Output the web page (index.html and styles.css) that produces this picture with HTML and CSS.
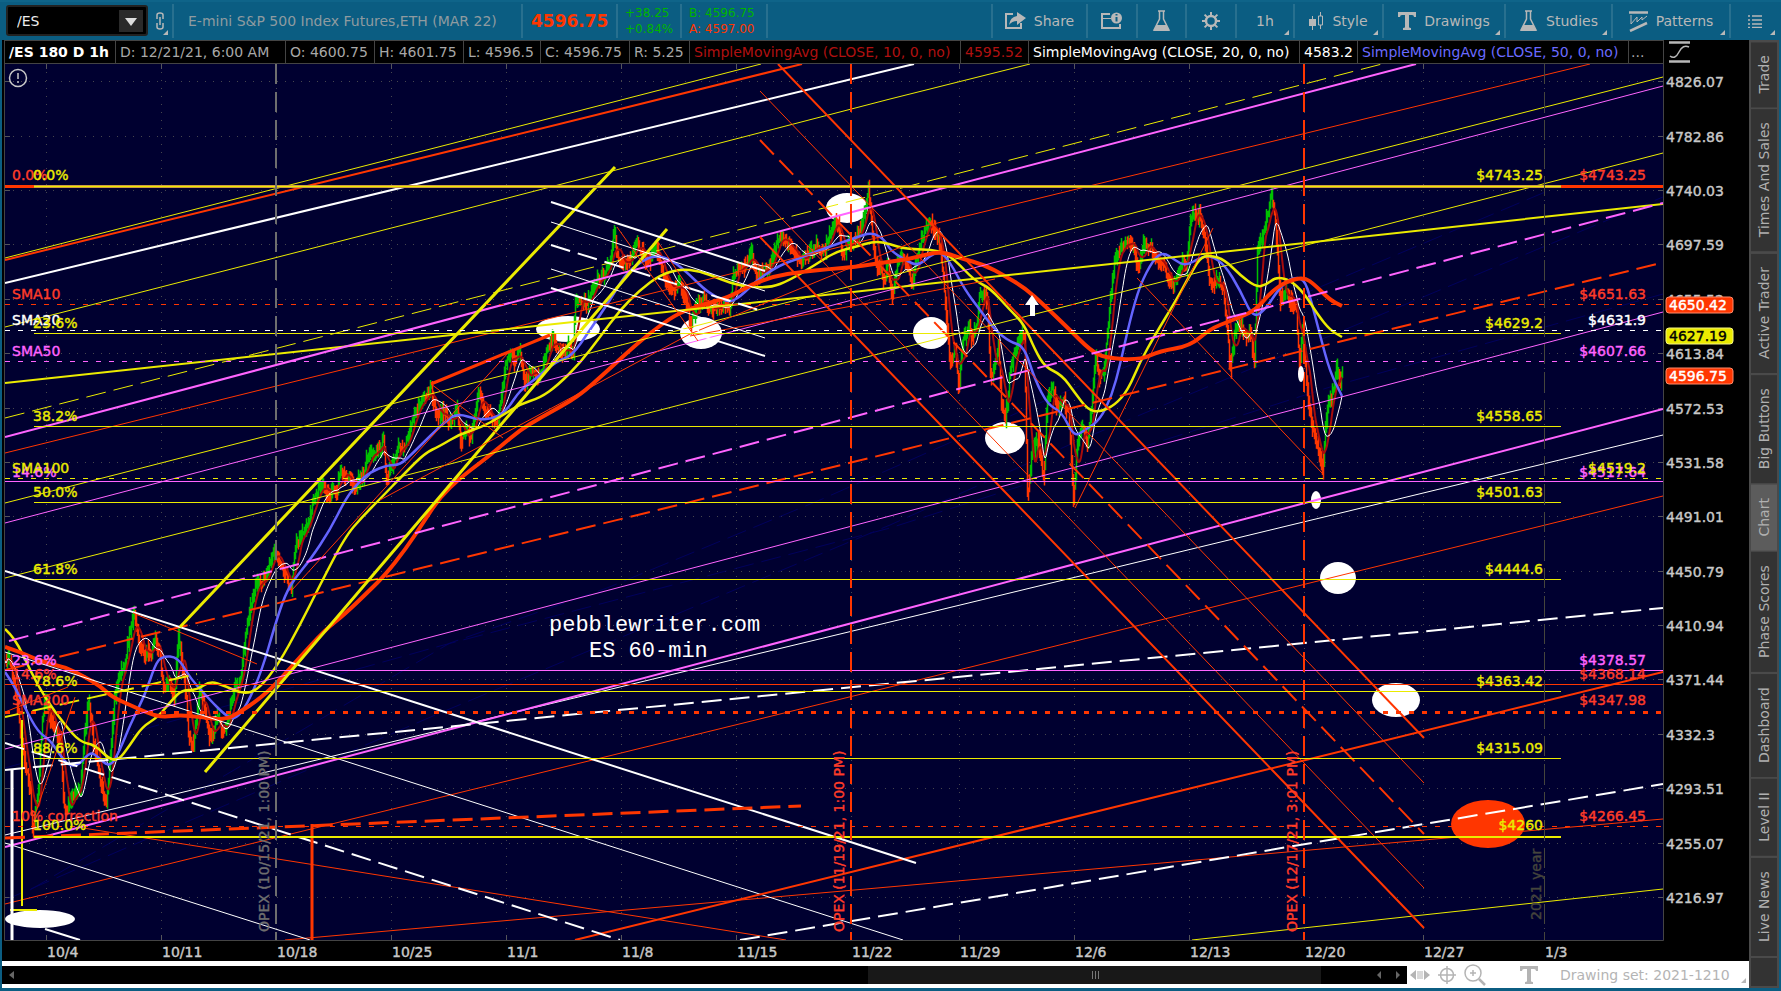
FILE: index.html
```
<!DOCTYPE html>
<html lang="en">
<head>
<meta charset="UTF-8">
<meta name="viewport" content="width=device-width, initial-scale=1.0">
<title>/ES 180 D 1h - Chart</title>
<link rel="stylesheet" href="styles.css">
</head>
<body>
  <!-- Toolbar -->
  <header class="toolbar">
    <div class="symbol">
      <label class="hidden" for="symbol">Symbol</label>
      <input type="text" id="symbol" value="/ES">
      <button class="drop" aria-label="Symbol list"><svg width="12" height="8"><path d="M0 0h12l-6 8z" fill="#ddd"/></svg></button>
    </div>
    <button class="link corner" aria-label="Link"><svg width="10" height="18" viewBox="0 0 10 18" fill="none" stroke="#b8b8b8" stroke-width="1.5"><path d="M2 7V3q0-2 3-2t3 2v4M2 11v4q0 2 3 2t3-2v-4M5 5v8"/></svg></button>
    <div class="name">E-mini S&amp;P 500 Index Futures,ETH (MAR 22)</div>
    <div class="last">4596.75</div>
    <div class="pair change"><span class="up">+38.25</span><span class="up">+0.84%</span></div>
    <div class="pair quote"><span class="up">B: 4596.75</span><span class="down">A: 4597.00</span></div>
    <div class="spacer"></div>
    <button class="tool share">
      <svg width="21" height="18" viewBox="0 0 21 18"><path d="M8 2H1v14h15v-5" fill="none" stroke="#b8b8b8" stroke-width="2"/><path d="M12 0l9 6-9 7V9q-5 0-8 4 1-8 8-9z" fill="#b8b8b8"/></svg>
      Share
    </button>
    <button class="tool info" aria-label="Symbol info"><svg width="22" height="18" viewBox="0 0 22 18" fill="none" stroke="#b8b8b8"><path d="M9 2H1v14h18v-4" stroke-width="2"/><path d="M1 6.500h9"/><circle cx="15.500" cy="6" r="5.500" fill="#b8b8b8" stroke="none"/><path d="M15.500 5v4.500M15.500 2v1.500" stroke="#0b5d82" stroke-width="2"/></svg></button>
    <button class="tool flask" aria-label="Quick study"><svg width="19" height="22" viewBox="0 0 19 22"><path d="M6 1h7M7.500 1v8L2 20h15L11.500 9V1" fill="none" stroke="#b8b8b8" stroke-width="1.500"/><path d="M4.500 15h10l3 6h-16z" fill="#b8b8b8"/></svg></button>
    <button class="tool gear" aria-label="Settings"><svg width="20" height="20" viewBox="0 0 20 20" fill="none" stroke="#b8b8b8"><circle cx="10" cy="10" r="5" stroke-width="2.500"/><path d="M10 1v4M10 15v4M1 10h4M15 10h4M3.600 3.600l3 3M13.400 13.400l3 3M3.600 16.400l3-3M13.400 6.600l3-3" stroke-width="2"/></svg></button>
    <button class="tool hour corner">1h</button>
    <button class="tool style corner">
      <svg width="15" height="18" viewBox="0 0 15 18"><path d="M3.500 4v14M11.500 0v4M11.500 13v4" stroke="#b8b8b8"/><path d="M0 7h7v7H0z" fill="#b8b8b8"/><path d="M9.500 4h4v9h-4z" fill="none" stroke="#b8b8b8"/></svg>
      Style
    </button>
    <button class="tool drawings corner">
      <svg width="18" height="18" viewBox="0 0 18 18"><path d="M0 0h18v5h-2q0-2-2-2h-3v12q0 1 2 1v2H5v-2q2 0 2-1V3H4Q2 3 2 5H0z" fill="#b8b8b8"/></svg>
      Drawings
    </button>
    <button class="tool studies corner">
      <svg width="19" height="22" viewBox="0 0 19 22"><path d="M6 1h7M7.500 1v8L2 20h15L11.500 9V1" fill="none" stroke="#b8b8b8" stroke-width="1.500"/><path d="M4.500 15h10l3 6h-16z" fill="#b8b8b8"/></svg>
      Studies
    </button>
    <button class="tool patterns corner">
      <svg width="19" height="21" viewBox="0 0 19 21" fill="none" stroke="#b8b8b8"><path d="M0 1.500h19M1 20l17-8" stroke-width="2.500"/><path d="M2 4v9l6-7v5l5-5v3l5-4"/></svg>
      Patterns
    </button>
    <button class="tool more corner" aria-label="Menu"><svg width="14" height="13" viewBox="0 0 14 13" stroke="#b8b8b8"><path d="M0 1h2M0 5h2M0 9h2M0 12.500h2M4 1h10M4 5h10M4 9h10M4 12.500h10" stroke-width="1.500"/></svg></button>
  </header>

  <div class="main">
    <div class="panel">
      <!-- Values under the cursor -->
      <div class="status">
        <div class="cells">
          <span class="bold">/ES 180 D 1h</span>
          <span class="date">D: 12/21/21, 6:00 AM</span>
          <span class="price">O: 4600.75</span>
          <span class="price">H: 4601.75</span>
          <span class="low">L: 4596.5</span>
          <span class="price">C: 4596.75</span>
          <span class="range">R: 5.25</span>
          <span class="study sma10">SimpleMovingAvg (CLOSE, 10, 0, no)</span>
          <span class="value sma10">4595.52</span>
          <span class="study sma20">SimpleMovingAvg (CLOSE, 20, 0, no)</span>
          <span class="sma20">4583.2</span>
          <span class="study sma50">SimpleMovingAvg (CLOSE, 50, 0, no)</span>
          <span class="rest">...</span>
        </div>
        <button class="scale" aria-label="Price axis"><svg width="22" height="22" viewBox="0 0 22 22" fill="none" stroke="#b8b8b8"><path d="M0 1.500h21M0 20.500h21" stroke-width="2.500"/><path d="M1 15q5 4 9-4t10-5" stroke-width="1.500"/></svg></button>
      </div>

      <!-- Chart: 1 unit across is one hourly bar -->
      <svg class="chart" viewBox="2 64 1747 897" preserveAspectRatio="none">
        <defs><clipPath id="plot"><path d="M5 64h1658v876H5z"/></clipPath></defs>
        <path class="sky" d="M5 64h1658v876H5z"/>
        <g id="grid"></g>
        <path class="edge" d="M4.500 64v876.500h1659V64"/>

        <g clip-path="url(#plot)">
          <g fill="#fff">
            <ellipse cx="40" cy="919" rx="35" ry="9"/>
            <ellipse cx="568" cy="329" rx="32" ry="13"/>
            <ellipse cx="701" cy="333" rx="21" ry="16"/>
            <ellipse cx="847" cy="208" rx="21" ry="15"/>
            <ellipse cx="931" cy="333" rx="18" ry="16"/>
            <ellipse cx="1005" cy="438" rx="20" ry="16"/>
            <ellipse cx="1316" cy="500" rx="5" ry="9"/>
            <ellipse cx="1338" cy="578" rx="18" ry="16"/>
            <ellipse cx="1396" cy="700" rx="24" ry="17"/>
          </g>
          <ellipse cx="1488" cy="824" rx="37" ry="24" fill="#ff3600"/>

          <g class="navy dash">
            <path d="M30 890L450 643 607 588 820 500 1060 394 1320 287 1550 190"/>
            <path d="M5 900L440 713 890 525 1080 440 1320 340 1663 197"/>
            <path d="M5 768L440 646 890 528 1330 387 1663 294"/>
          </g>

          <!-- candles and averages are filled in by chart.js -->
          <path id="up" class="bar-up"/>
          <path id="down" class="bar-down"/>
          <path id="sma10" class="avg sma10-line"/>
          <path id="sma20" class="avg sma20-line"/>
          <path id="sma50" class="avg sma50-line"/>
          <path id="sma100" class="avg sma100-line"/>
          <path id="sma200" class="avg sma200-line"/>

          <!-- rising channels -->
          <g class="yellow thin">
            <path d="M5 258L450 144 761 64M5 327L450 213 890 99 1030 64M5 503L450 389 890 276 1330 162 1663 77M5 578L450 464 890 351 1330 239 1663 153M1192 940L1663 889"/>
            <path class="dash" d="M5 418L890 191 1382 64"/>
          </g>
          <g class="magenta thin"><path d="M5 523L450 406 890 290 1330 174 1663 86M5 749L450 632 890 516 1330 400 1663 312"/></g>
          <g class="red thin"><path d="M5 453L880 237 1590 64M5 904L450 795 890 687 1330 578 1663 496M83 828L786 940M285 940L1663 819"/></g>
          <g class="white thin"><path d="M5 652L903 940M5 843L310 940M5 835L890 622 1663 435"/></g>
          <g class="yellow mid">
            <path d="M5 383L890 288 1663 204"/>
            <path class="dash" d="M5 717L197 674"/>
            <path d="M22 720V906M10 910H37"/>
          </g>
          <g class="magenta mid">
            <path d="M5 437L890 202 1416 64M5 847L890 613 1320 499 1663 409"/>
            <path class="dash" d="M9 641L890 407 1663 203"/>
          </g>
          <g class="red mid">
            <path d="M5 260L450 151 802 64M575 940L1663 672"/>
            <path class="dash" d="M5 670L450 561 890 453 1330 344 1657 264"/>
          </g>
          <g class="white mid">
            <path d="M5 283L450 176 914 64M5 571L916 863M45 929L80 940"/>
            <path class="dash" d="M5 743L620 940M5 770L1663 608M740 940L1323 841 1663 784"/>
          </g>
          <path class="yellow thick" d="M180 627L615 167M205 772L437 500 667 229"/>
          <path class="red thick" d="M431 384L550 335M312 824V940"/>
          <path class="white thick" d="M12 769V940"/>
          <path class="red thick dash" d="M5 838L801 806"/>

          <!-- falling channels -->
          <g class="white">
            <path class="mid" d="M551 202L765 271M551 288L765 356"/>
            <path class="mid dash" d="M551 245L759 310"/>
            <path class="thin" d="M551 222L765 291M551 269L765 338"/>
          </g>
          <g class="red">
            <path class="mid" d="M778 64L1424 738M760 237L1424 928"/>
            <path class="mid dash" d="M760 140L1424 834"/>
            <path class="thin" d="M760 91L1424 783M760 196L1424 888"/>
            <path class="thin" d="M431 384L503 438M292 590L508 353M380 500L690 334 930 235M690 336L890 299 995 279M617 227L698 341M658 242L690 290M1137 278L1322 473M1075 508L1213 228M133 613L257 664M35 815L75 697M5 712L68 687"/>
          </g>

          <!-- levels -->
          <path class="red thick" d="M5 186.500H1663"/>
          <path class="amber thick" d="M34 186.500H1561"/>
          <path class="yellow crisp" d="M34 186.500H1561M34 333.500H1561M34 426.500H1561M34 502.500H1561M34 579.500H1561M34 691.500H1561M34 758.500H1561"/>
          <path class="yellow mid" d="M34 837H1561"/>
          <path class="magenta crisp" d="M5 481.500H1663M5 670.500H1663"/>
          <path class="red crisp" d="M5 684.500H1663"/>
          <path class="red crisp short" d="M5 304.500H1663M5 826.500H1663"/>
          <path class="white crisp short" d="M5 330.500H1663"/>
          <path class="magenta crisp short" d="M5 361.500H1663"/>
          <path class="yellow crisp short" d="M5 478.500H1663"/>
          <path class="red thick short" d="M5 712.500H1663"/>
          <path class="gray mid dash" d="M276 64V940"/>
          <path class="red mid dash" d="M851 64V940M1304 64V940"/>
          <path class="dim thin dash" d="M1544.500 64V940"/>

          <ellipse cx="1301" cy="374" rx="3" ry="8" fill="#fff"/>
          <path d="M1032 295l7 10h-4v11h-5v-11h-5z" fill="#fff"/>
        </g>

        <g fill="none" stroke="#c8c8c8" stroke-width="1.500"><circle cx="18" cy="78" r="8.500"/><path d="M18 73v6M18 81v2"/></g>

        <g class="t-red">
          <text x="12" y="180">0.0%</text><text x="12" y="299">SMA10</text><text x="12" y="679">14.6%</text>
          <text x="12" y="705">SMA200</text><text x="12" y="821">10% correction</text>
        </g>
        <g class="t-magenta">
          <text x="12" y="356">SMA50</text><text x="12" y="477">14.6%</text><text x="12" y="665">23.6%</text>
        </g>
        <g class="t-white"><text x="12" y="325">SMA20</text></g>
        <g class="t-yellow">
          <text x="12" y="473">SMA100</text>
          <text x="33" y="180">0.0%</text><text x="33" y="328">23.6%</text><text x="33" y="421">38.2%</text><text x="33" y="497">50.0%</text>
          <text x="33" y="574">61.8%</text><text x="33" y="686">78.6%</text><text x="33" y="753">88.6%</text><text x="33" y="830">100.0%</text>
        </g>
        <g class="t-yellow end">
          <text x="1543" y="180">$4743.25</text><text x="1543" y="328">$4629.2</text><text x="1543" y="421">$4558.65</text><text x="1543" y="497">$4501.63</text>
          <text x="1543" y="574">$4444.6</text><text x="1543" y="686">$4363.42</text><text x="1543" y="753">$4315.09</text><text x="1543" y="830">$4260</text>
        </g>
        <g class="t-red end">
          <text x="1646" y="180">$4743.25</text><text x="1646" y="299">$4651.63</text><text x="1646" y="679">$4368.14</text>
          <text x="1646" y="705">$4347.98</text><text x="1646" y="821">$4266.45</text>
        </g>
        <g class="t-magenta end"><text x="1646" y="356">$4607.66</text><text x="1646" y="477">$4517.64</text><text x="1646" y="665">$4378.57</text></g>
        <g class="t-white end"><text x="1646" y="325">$4631.9</text></g>
        <g class="t-yellow end"><text x="1646" y="473">$4519.2</text></g>

        <text class="t-gray" transform="translate(269 932) rotate(-90)">OPEX (10/15/21, 1:00 PM)</text>
        <text class="t-red" transform="translate(844 932) rotate(-90)">OPEX (11/19/21, 1:00 PM)</text>
        <text class="t-red" transform="translate(1297 932) rotate(-90)">OPEX (12/17/21, 3:01 PM)</text>
        <text class="t-dim" transform="translate(1541 920) rotate(-90)">2021 year</text>
        <text class="note" x="549" y="631">pebblewriter.com</text>
        <text class="note" x="589" y="657">ES 60-min</text>

        <g id="axis" class="axis"></g>
        <g class="badge">
          <rect x="1666" y="297" width="67" height="16" rx="3" fill="#ff3600" stroke="#ff8a6a"/><text x="1669" y="310">4650.42</text>
          <rect x="1666" y="328" width="67" height="16" rx="3" fill="#ebeb00" stroke="#f5f580"/><text x="1669" y="341" class="t-black">4627.19</text>
          <rect x="1666" y="368" width="67" height="16" rx="3" fill="#ff3600" stroke="#ff8a6a"/><text x="1669" y="381">4596.75</text>
        </g>
      </svg>

      <!-- Scroll bar and drawing tools -->
      <div class="bottom">
        <div class="scroll">
          <svg width="6" height="8"><path d="M6 0v8L1 4z" fill="#666"/></svg>
          <div class="track"><div class="thumb"><svg width="8" height="8" stroke="#777"><path d="M1.500 0v8M4.500 0v8M7.500 0v8"/></svg></div></div>
          <svg width="6" height="8"><path d="M5 0v8L1 4z" fill="#666"/></svg>
          <svg width="6" height="8"><path d="M1 0v8l4-4z" fill="#666"/></svg>
        </div>
        <div class="icons">
          <button aria-label="Pan"><svg width="20" height="14" viewBox="0 0 20 14"><path d="M6 2v10L0 7zM14 2v10l6-5z" fill="#b4b4b4"/><path d="M8 3v8M10 3v8M12 3v8" stroke="#b4b4b4"/></svg></button>
          <button aria-label="Crosshair"><svg width="18" height="18" viewBox="0 0 18 18" fill="none" stroke="#b4b4b4" stroke-width="1.500"><circle cx="9" cy="9" r="6.500"/><path d="M9 0v18M0 9h18"/></svg></button>
          <button aria-label="Zoom in"><svg width="22" height="22" viewBox="0 0 22 22" fill="none" stroke="#b4b4b4" stroke-width="1.500"><circle cx="9" cy="9" r="8"/><path d="M9 6v6M6 9h6"/><path d="M15 15l6 6" stroke-width="2.500"/></svg></button>
          <button class="text" aria-label="Text"><svg width="18" height="18" viewBox="0 0 18 18"><path d="M0 0h18v5h-2q0-2-2-2h-3v12q0 1 2 1v2H5v-2q2 0 2-1V3H4Q2 3 2 5H0z" fill="#b4b4b4"/></svg></button>
          <button class="set corner">Drawing set: 2021-1210</button>
        </div>
      </div>
    </div>

    <!-- Side tabs -->
    <nav class="tabs">
      <button>Trade</button>
      <button>Times And Sales</button>
      <button>Active Trader</button>
      <button>Big Buttons</button>
      <button class="active">Chart</button>
      <button>Phase Scores</button>
      <button>Dashboard</button>
      <button>Level II</button>
      <button>Live News</button>
      <div class="fill"></div>
    </nav>
  </div>
  <script src="chart.js"></script>
</body>
</html>
```
FILE: styles.css
```
* {
  box-sizing: border-box;
}

body {
  margin: 0;
  height: 100vh;
  display: flex;
  flex-direction: column;
  background: #0b5d82;
  color: #b8b8b8;
  font-family: "DejaVu Sans", Verdana, sans-serif;
  font-size: 14px;
  overflow: hidden;
}

button {
  border: 0;
  padding: 0;
  background: none;
  color: inherit;
  font: inherit;
  white-space: nowrap;
}

svg {
  flex: none;
}

.hidden {
  position: absolute;
  width: 1px;
  height: 1px;
  overflow: hidden;
  opacity: 0;
}

/* Toolbar */
.toolbar {
  flex: none;
  height: 40px;
  padding: 2px 2px 2px 6px;
  border-top: 2px solid #0f6489;
  display: flex;
  align-items: stretch;
  white-space: nowrap;
}

.toolbar > * {
  flex: none;
  display: flex;
  align-items: center;
}

.symbol {
  width: 142px;
  height: 31px;
  margin-top: 1px;
  padding: 3px;
  border: 2px solid #222;
  border-radius: 3px;
  background: #000;
}

.symbol input {
  flex: 1;
  min-width: 0;
  border: 0;
  padding: 0 6px;
  background: none;
  color: #eee;
  font: inherit;
}

.drop {
  width: 24px;
  height: 22px;
  background: #2a2a2a;
}

.link {
  width: 24px;
  justify-content: center;
}

.name {
  width: 349px;
  padding-left: 14px;
  border-left: 2px solid #28708f;
  color: #8f9ba0;
}

.last {
  width: 95px;
  padding-left: 8px;
  border-left: 2px solid #28708f;
  color: #ff3600;
  font-size: 17px;
  font-weight: bold;
}

.toolbar .pair {
  flex-direction: column;
  align-items: flex-start;
  justify-content: center;
  padding-left: 7px;
  border-left: 2px solid #28708f;
  font-size: 12px;
  line-height: 16px;
}

.change {
  width: 64px;
}

.quote {
  width: 88px;
  border-right: 2px solid #28708f;
}

.up {
  color: #00b400;
}

.down {
  color: #ff3600;
}

.toolbar .spacer {
  flex: 1;
}

.tool {
  gap: 8px;
  justify-content: center;
  border-left: 2px solid #28708f;
}

.share { width: 95px; }
.info { width: 50px; }
.flask { width: 49px; }
.gear { width: 50px; }
.hour { width: 58px; }
.style { width: 89px; }
.drawings { width: 122px; }
.studies { width: 107px; }
.patterns { width: 118px; }
.more { width: 50px; }

.corner {
  position: relative;
}

.corner::after {
  content: "";
  position: absolute;
  right: 4px;
  bottom: 3px;
  border-left: 5px solid transparent;
  border-bottom: 5px solid #b8b8b8;
}

/* Chart panel */
.main {
  flex: 1;
  min-height: 0;
  display: flex;
  padding: 0 2px 3px;
}

.panel {
  flex: 1;
  min-width: 0;
  display: flex;
  flex-direction: column;
  background: #000;
}

.status {
  flex: none;
  height: 24px;
  display: flex;
}

.cells {
  flex: 1;
  min-width: 0;
  margin-left: 2px;
  display: flex;
  overflow: hidden;
  border: 1px solid #444;
  line-height: 22px;
  white-space: nowrap;
  color: #a8a8a8;
}

.cells span {
  flex: none;
  padding: 0 4px;
  border-right: 1px solid #444;
}

.cells .rest {
  padding: 0 2px;
  border: 0;
}

.cells .bold {
  min-width: 111px;
  color: #fff;
  font-weight: bold;
}

.date { min-width: 170px; }
.price { min-width: 89px; }
.low { min-width: 77px; }
.range { min-width: 60px; }
.value { min-width: 68px; }
.study { min-width: 271px; }

.cells .sma10 { color: #b01010; }
.cells .sma20 { color: #fff; }
.cells .sma50 { color: #6a6aff; }

.scale {
  width: 85px;
  padding-left: 5px;
  display: flex;
  align-items: center;
}

.chart {
  flex: 1;
  width: 100%;
  min-height: 0;
  display: block;
}

.chart path {
  fill: none;
}

.chart g[fill="#fff"] ellipse,
.chart path[fill="#fff"] {
  fill: #fff;
}

.chart .sky { fill: #000030; }
.edge { stroke: #444; }
.dots { stroke: #46464e; stroke-dasharray: 1 7; }
.ticks { stroke: #55555a; }

.yellow { stroke: #ebeb00; }
.magenta { stroke: #ff64ff; }
.red { stroke: #ff3600; }
.white { stroke: #fff; }
.amber { stroke: #cf9a40; }
.gray { stroke: #6e6e6e; }
.dim { stroke: #45453c; }
.navy { stroke: #00005c; }
.thin { stroke-width: 1; }
.crisp { stroke-width: 1; shape-rendering: crispEdges; }
.mid { stroke-width: 2; }
.thick { stroke-width: 3; }
.dash { stroke-dasharray: 20 8; }
.short { stroke-dasharray: 5 8; }

.bar-up { stroke: #00c000; stroke-width: 1.5; }
.bar-down { stroke: #ff3600; stroke-width: 1.5; }
.avg { stroke-linejoin: round; }
.sma10-line { stroke: #a80c0c; stroke-width: 2; }
.sma20-line { stroke: #fff; }
.sma50-line { stroke: #6464ff; stroke-width: 2.5; }
.sma100-line { stroke: #ebeb00; stroke-width: 2.5; }
.sma200-line { stroke: #ff3600; stroke-width: 4; }

/* Labels carry a hairline in their own colour to read over the lines */
.chart text { stroke-width: 0.4; }
.t-red { fill: #ff3c28; stroke: #ff3c28; }
.t-yellow { fill: #ebeb00; stroke: #ebeb00; }
.t-magenta { fill: #ff64ff; stroke: #ff64ff; }
.t-white { fill: #fff; stroke: #fff; }
.t-gray { fill: #6e6e6e; stroke: #6e6e6e; }
.t-dim { fill: #45453c; stroke: #45453c; }
.end { text-anchor: end; }
.axis { fill: #c8c8c8; stroke: #c8c8c8; }
.badge text { fill: #fff; stroke: #fff; }
.badge .t-black { fill: #000; stroke: #000; }

.note {
  fill: #fff;
  font-family: "Liberation Mono", "Courier New", monospace;
  font-size: 22px;
}

/* Bottom bar */
.bottom {
  flex: none;
  height: 27px;
  display: flex;
  align-items: center;
  background: #fff;
}

.scroll {
  flex: 1;
  height: 18px;
  padding: 0 6px;
  display: flex;
  align-items: center;
  gap: 13px;
  background: #000;
}

.track {
  flex: 1;
  height: 18px;
  padding: 0 3% 0 61%;
}

.thumb {
  height: 18px;
  margin-left: -2%;
  display: flex;
  align-items: center;
  justify-content: center;
  background: #181818;
}

.icons {
  width: 342px;
  display: flex;
  align-items: center;
  gap: 8px;
  padding-left: 3px;
  color: #b4b4b4;
}

.icons button {
  display: flex;
}

.icons .text {
  margin: 0 14px 0 26px;
}

.icons .set {
  flex: 1;
}

.icons .set::after {
  right: 3px;
  bottom: 0;
}

/* Side tabs */
.tabs {
  flex: none;
  width: 30px;
  padding: 2px;
  display: flex;
  flex-direction: column;
  gap: 2px;
  background: #4a4a4a;
}

.tabs button {
  flex: 1 0 auto;
  padding: 12px 0;
  background: #333;
  color: #b0b0b0;
  line-height: 26px;
  writing-mode: vertical-rl;
  transform: rotate(180deg);
}

.tabs .active {
  background: #5c5c5c;
}

.tabs .fill {
  flex: none;
  height: 28px;
  background: #333;
}
```
FILE: chart.js
```
const el = id => document.getElementById(id);

const dates = [[46, '10/4'], [161, '10/11'], [276, '10/18'], [391, '10/25'], [506, '11/1'], [621, '11/8'], [736, '11/15'],
  [851, '11/22'], [959, '11/29'], [1074, '12/6'], [1189, '12/13'], [1304, '12/20'], [1423, '12/27'], [1544, '1/3']];
const prices = [[81, '4826.07'], [136, '4782.86'], [190, '4740.03'], [244, '4697.59'], [299, '4655.52'], [353, '4613.84'],
  [408, '4572.53'], [462, '4531.58'], [516, '4491.01'], [571, '4450.79'], [625, '4410.94'], [679, '4371.44'],
  [734, '4332.3'], [788, '4293.51'], [843, '4255.07'], [897, '4216.97']];

// Grid and axis labels
let dots = '', ticks = '', labels = '';
dates.forEach(([x, text]) => {
  dots += `M${x + 0.5} 64V940`;
  ticks += `M${x + 0.5} 64v5M${x + 0.5} 935v5`;
  labels += `<text x="${x + 1}" y="957">${text}</text>`;
});
prices.forEach(([y, text]) => {
  dots += `M5 ${y + 0.5}H1663`;
  ticks += `M5 ${y + 0.5}h5M1658 ${y + 0.5}h5`;
  labels += `<text x="1666" y="${y + 6}">${text}</text>`;
});
el('grid').innerHTML = `<path class="dots" d="${dots}"/><path class="ticks" d="${ticks}"/>`;
el('axis').innerHTML = labels;

// Turning points of the price, x then y
const turns = [5,665,8,655,14,680,19,720,24,760,30,790,32,830,38,790,42,720,45,695,50,720,55,730,60,740,63,800,65,815,70,800,75,790,
  80,790,84,735,88,700,92,735,98,770,103,790,106,805,110,760,114,700,118,680,124,665,130,630,133,615,138,640,143,655,150,650,155,640,
  160,655,163,690,168,680,174,695,178,635,182,665,186,700,188,735,193,745,199,690,205,710,210,740,217,720,223,735,228,720,232,695,
  240,680,245,640,250,605,256,585,263,580,268,570,273,550,276,552,280,563,284,572,291,588,295,545,302,533,309,520,313,500,318,490,
  323,487,328,495,332,492,337,490,340,468,344,475,350,480,354,490,358,480,363,475,367,455,373,452,378,450,383,440,386,478,392,465,
  398,450,405,445,410,425,418,405,425,400,431,390,436,415,442,412,447,420,453,420,457,405,460,440,465,428,470,438,475,410,478,395,
  483,405,490,415,496,425,500,405,504,370,508,355,514,362,519,350,524,385,530,370,536,378,541,372,546,350,551,340,556,345,561,352,
  568,348,573,352,575,300,578,298,585,305,592,290,598,280,605,275,610,260,614,230,617,255,623,265,630,262,636,240,641,252,648,262,
  655,248,660,262,665,280,672,290,680,285,686,300,690,325,697,305,703,295,708,312,714,310,722,305,729,307,733,275,738,265,745,268,
  750,250,756,275,763,268,770,270,775,248,780,235,786,245,793,250,800,262,808,255,815,245,822,255,828,240,833,220,838,225,842,255,
  850,240,855,240,860,232,866,205,868,190,870,210,873,240,875,260,880,270,883,285,888,265,892,295,896,270,900,255,905,260,912,285,
  917,255,922,235,929,222,935,232,940,245,943,280,947,325,950,365,955,350,958,385,963,340,968,325,972,340,977,320,980,290,987,300,
  990,380,995,360,998,345,1001,400,1005,420,1010,370,1015,350,1020,335,1024,340,1027,495,1032,450,1038,440,1043,480,1047,400,
  1052,385,1057,410,1062,400,1068,410,1071,460,1073,500,1077,440,1082,425,1087,445,1092,400,1095,360,1100,380,1104,370,1107,330,
  1110,300,1114,260,1120,250,1127,240,1133,245,1137,270,1143,245,1150,248,1157,260,1163,265,1170,285,1176,280,1182,260,1186,265,
  1190,220,1193,212,1200,217,1205,240,1210,285,1217,280,1222,285,1226,320,1230,370,1235,330,1240,325,1245,335,1250,330,1254,365,
  1257,250,1262,235,1267,215,1271,195,1275,220,1280,300,1285,290,1290,300,1296,310,1299,370,1302,330,1308,400,1312,430,1316,440,
  1320,460,1322,470,1325,430,1328,400,1332,395,1336,370,1340,380,1343,370];

// Longer averages
const sma50 = [5,672,14,685,25,708,38,732,50,740,60,755,68,765,78,766,90,752,97,756,110,768,120,750,130,725,145,695,155,665,162,656,
  178,657,190,678,210,700,225,715,235,720,247,705,262,670,275,625,285,595,295,578,310,560,330,530,345,500,357,484,370,472,388,465,
  400,465,413,453,430,436,445,422,457,413,478,420,495,418,507,410,520,390,537,378,555,362,572,356,590,330,610,300,625,275,640,262,
  655,255,672,260,690,275,707,292,728,303,740,297,757,280,780,265,800,258,820,250,840,243,855,238,872,232,885,240,890,250,905,260,
  918,266,930,256,940,251,950,262,965,290,980,310,995,330,1010,342,1024,346,1035,380,1048,405,1062,412,1074,437,1085,430,1100,420,
  1112,395,1120,365,1130,320,1140,285,1153,260,1163,252,1175,260,1185,266,1200,258,1210,255,1225,265,1240,290,1253,318,1265,310,
  1278,290,1290,278,1304,278,1311,300,1320,335,1330,372,1342,396];
const sma100 = [5,629,15,638,30,670,45,698,65,725,80,742,95,745,108,758,118,761,130,745,142,727,158,717,172,700,182,690,197,690,
  210,681,225,686,243,694,258,690,278,665,300,625,320,585,345,537,362,517,379,500,405,473,425,453,440,446,460,434,480,428,500,417,
  520,404,540,398,558,385,580,363,600,337,620,310,640,290,660,275,680,269,700,271,720,279,740,286,770,288,790,280,815,265,835,252,
  855,247,875,241,890,244,905,249,940,250,955,260,975,281,990,288,1010,310,1024,324,1035,350,1045,367,1062,375,1075,393,1088,410,
  1100,412,1115,405,1128,390,1140,362,1155,335,1175,302,1190,275,1200,258,1210,255,1225,260,1240,275,1256,287,1266,285,1276,277,
  1290,280,1304,293,1318,315,1330,330,1342,337];
const sma200 = [5,647,20,652,45,663,65,667,85,677,100,686,112,697,130,705,150,714,163,717,180,715,200,717,225,720,240,712,258,700,
  275,685,300,657,325,630,345,614,370,590,385,575,405,550,425,520,440,497,460,478,480,463,500,447,520,430,540,418,560,407,580,395,
  605,373,630,350,650,333,675,315,695,307,730,297,750,285,775,276,800,272,830,269,855,267,880,263,910,259,940,251,960,258,985,265,
  1005,276,1025,288,1045,306,1070,330,1090,350,1105,358,1140,360,1160,351,1190,346,1210,329,1230,321,1255,311,1270,293,1285,282,
  1304,277,1315,285,1330,300,1342,306];

// Repeatable noise for the hourly bars
let seed = 7;
function noise() {
  seed = (seed * 16807) % 2147483647;
  return seed / 2147483647;
}

const closes = [];
for (let i = 0; i + 3 < turns.length; i += 2) {
  const [x0, y0, x1, y1] = turns.slice(i, i + 4);
  for (let x = x0; x < x1; x++) {
    closes.push(y0 + (y1 - y0) * (x - x0) / (x1 - x0) + noise() * 8 - 4);
  }
}

let up = '', down = '';
closes.forEach((close, i) => {
  const open = i ? closes[i - 1] : close;
  const high = Math.min(open, close) - 1 - noise() * 8;
  const low = Math.max(open, close) + 1 + noise() * 8;
  const bar = `M${i + 5.5} ${high.toFixed(1)}V${low.toFixed(1)}`;
  const trend = closes[Math.max(0, i - 3)];
  if (close + noise() * 10 - 4 < trend) up += bar; else down += bar;
});
el('up').setAttribute('d', up);
el('down').setAttribute('d', down);

function average(length) {
  return 'M' + closes.map((close, i) => {
    const part = closes.slice(Math.max(0, i - length + 1), i + 1);
    return `${i + 5} ${(part.reduce((a, b) => a + b) / part.length).toFixed(1)}`;
  }).join('L');
}

// Smooth curve through the midpoints
function curve(p) {
  let d = `M${p[0]} ${p[1]}`;
  for (let i = 2; i + 3 < p.length; i += 2) {
    d += `Q${p[i]} ${p[i + 1]} ${(p[i] + p[i + 2]) / 2} ${(p[i + 1] + p[i + 3]) / 2}`;
  }
  return d + `L${p[p.length - 2]} ${p[p.length - 1]}`;
}

el('sma10').setAttribute('d', average(10));
el('sma20').setAttribute('d', average(20));
el('sma50').setAttribute('d', curve(sma50));
el('sma100').setAttribute('d', curve(sma100));
el('sma200').setAttribute('d', curve(sma200));
```
